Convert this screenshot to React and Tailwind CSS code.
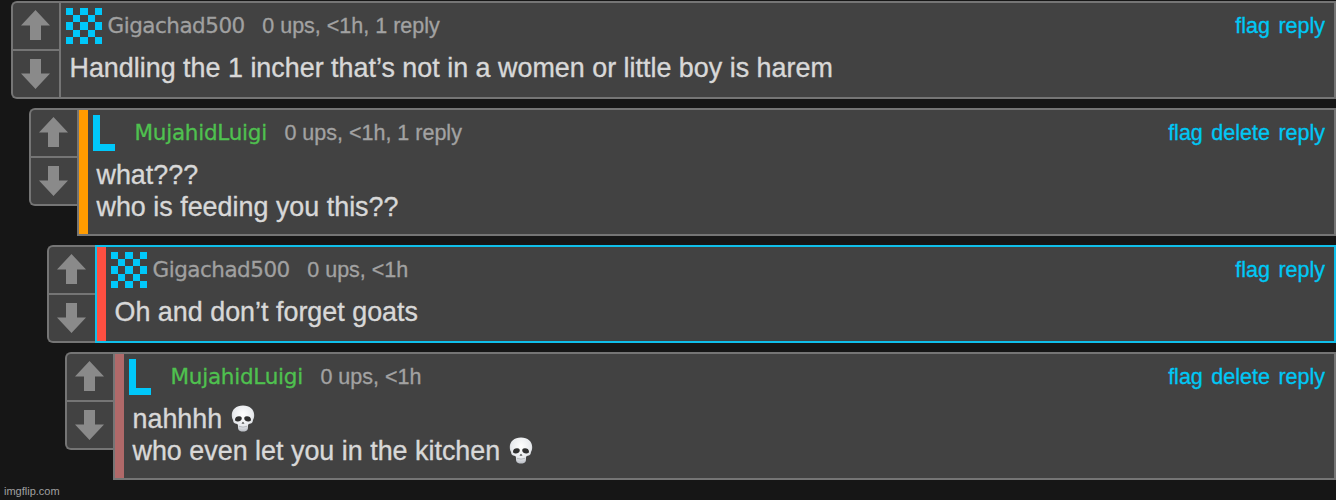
import clsx from "clsx";

const comments = [
  {
    id: 1,
    user: "Gigachad500",
    meta: "0 ups, <1h, 1 reply",
    links: ["flag", "reply"],
    lines: ["Handling the 1 incher that’s not in a women or little boy is harem"],
    indent: "ml-[11px]",
  },
  {
    id: 2,
    user: "MujahidLuigi",
    meta: "0 ups, <1h, 1 reply",
    links: ["flag", "delete", "reply"],
    lines: ["what???", "who is feeding you this??"],
    indent: "ml-[29px]",
    bar: "bg-[#ff9b00]",
  },
  {
    id: 3,
    user: "Gigachad500",
    meta: "0 ups, <1h",
    links: ["flag", "reply"],
    lines: ["Oh and don’t forget goats"],
    indent: "ml-[47px]",
    bar: "bg-[#ff4f41]",
    active: true,
  },
  {
    id: 4,
    user: "MujahidLuigi",
    meta: "0 ups, <1h",
    links: ["flag", "delete", "reply"],
    lines: ["nahhhh 💀", "who even let you in the kitchen 💀"],
    indent: "ml-[65px]",
    bar: "bg-[#b06969]",
  },
];

const users = {
  Gigachad500: {
    pixels: ["x.x.x", ".x.x.", "x.x.x", ".x.x.", "x.x.x"],
    className: "text-[#a0a0a0] tracking-[-0.5px]",
  },
  MujahidLuigi: {
    pixels: ["x....", "x....", "x....", "x....", "xxx.."],
    className: "text-[#4fc14f] tracking-[-0.25px]",
  },
};

const Avatar = ({ pixels }) => (
  <svg viewBox="0 0 5 5" className="w-9 h-9 shrink-0 fill-[#00c8fa]" shapeRendering="crispEdges">
    {pixels.map((row, y) =>
      row.split("").map((p, x) =>
        p === "x" ? <rect key={`${x}-${y}`} x={x} y={y} width="1" height="1" /> : null
      )
    )}
  </svg>
);

const Arrow = ({ down }) => (
  <svg viewBox="0 0 29 30" className={clsx("w-[29px] h-[30px] fill-[#8a8a8a]", down && "rotate-180")}>
    <path d="M14.5 0 29 15.5H20V30H9V15.5H0Z" />
  </svg>
);

const Skull = () => (
  <svg viewBox="0 0 24 27" className="inline-block w-6 h-[27px] ml-[1.5px] align-[-4px]">
    <defs>
      <radialGradient id="bone" cx="50%" cy="35%" r="65%">
        <stop offset="0" stopColor="#ffffff" />
        <stop offset="0.65" stopColor="#e9ebee" />
        <stop offset="1" stopColor="#b9bdc4" />
      </radialGradient>
    </defs>
    <path
      fill="url(#bone)"
      d="M12 .5C5.200.500.800 4.400.800 10c0 2.500.600 3.600 1.100 4.800.400 1 .200 2.300 1.300 3.100 1.100.800 2.900.500 3.500 1.500.500.800.100 2.900.500 4.500.500 1.900 2.800 2.600 4.800 2.600s4.300-.700 4.800-2.600c.400-1.600 0-3.700.500-4.500.600-1 2.400-.700 3.500-1.500 1.100-.800.900-2.100 1.300-3.100.500-1.200 1.100-2.300 1.100-4.800C23.200 4.400 18.800.500 12 .500Z"
    />
    <path d="M4 14.800C4 12.300 6 11.200 8.200 11.300 10.300 11.400 11 12.500 10.700 14 10.300 15.700 8.900 16.400 6.900 16.500 5.200 16.600 4 16.200 4 14.800Z" fill="#303030" />
    <path d="M20 14.800C20 12.300 18 11.200 15.800 11.300 13.700 11.400 13 12.500 13.300 14 13.700 15.700 15.100 16.400 17.100 16.500 18.800 16.600 20 16.200 20 14.800Z" fill="#303030" />
    <path d="M12 16.800 13.500 18.700 12 18.500 10.500 18.700Z" fill="#303030" />
    <path d="M8 21.300Q12 23 16 21.300" fill="none" stroke="#a9adb2" strokeWidth=".8" />
  </svg>
);

const Line = ({ text }) => (
  <p className="whitespace-pre">
    {text.split("💀").map((part, i) => (
      <span key={i}>
        {i > 0 && <Skull />}
        {part}
      </span>
    ))}
  </p>
);

const VoteBox = () => (
  <div className="w-12 h-[98px] shrink-0 flex flex-col rounded-l-md border-2 border-r-0 border-[#757575] bg-[#424242]">
    <button className="h-[46px] flex items-center justify-center pb-0.5 pr-px">
      <Arrow />
    </button>
    <button className="h-12 flex items-center justify-center border-t-2 border-[#757575] pr-px">
      <Arrow down />
    </button>
  </div>
);

const Comment = ({ user, meta, links, lines, indent, bar, active }) => (
  <div className={clsx("flex items-start", indent)}>
    <VoteBox />
    <div
      className={clsx(
        "flex-1 flex min-h-[98px] border-2 bg-[#424242]",
        active ? "border-[#10bfea]" : "border-[#757575]"
      )}
    >
      {bar && <div className={clsx("w-[9px] shrink-0", bar)} />}
      <div className="flex-1 pt-[5px] pb-[10px]">
        <div className="flex items-center pl-[5px] pr-[9px] h-9 text-[21.5px] [-webkit-text-stroke:0.3px]">
          <Avatar pixels={users[user].pixels} />
          <a className={clsx("ml-[5.5px] font-['DejaVu_Sans',Verdana,sans-serif]", users[user].className)}>
            {user}
          </a>
          <span className="ml-[17.5px] text-[#a2a2a2]">{meta}</span>
          <div className="ml-auto flex gap-[8.5px] text-[#00c8f5]">
            {links.map((link) => (
              <a key={link}>{link}</a>
            ))}
          </div>
        </div>
        <div className="mt-2 pl-[8.5px] text-[26.9px] leading-[32.3px] text-[#d8d8d8] [-webkit-text-stroke:0.35px]">
          {lines.map((line) => (
            <Line key={line} text={line} />
          ))}
        </div>
      </div>
    </div>
  </div>
);

export default function App() {
  return (
    <div className="relative w-full h-[500px] overflow-hidden bg-[#161616] pt-px flex flex-col gap-[9.2px] font-['Liberation_Sans',Helvetica,sans-serif]">
      {comments.map((comment) => (
        <Comment key={comment.id} {...comment} />
      ))}
      <span className="absolute left-1 bottom-[2px] text-[11px] leading-[13px] text-[#a0a0a0]">
        imgflip.com
      </span>
    </div>
  );
}
